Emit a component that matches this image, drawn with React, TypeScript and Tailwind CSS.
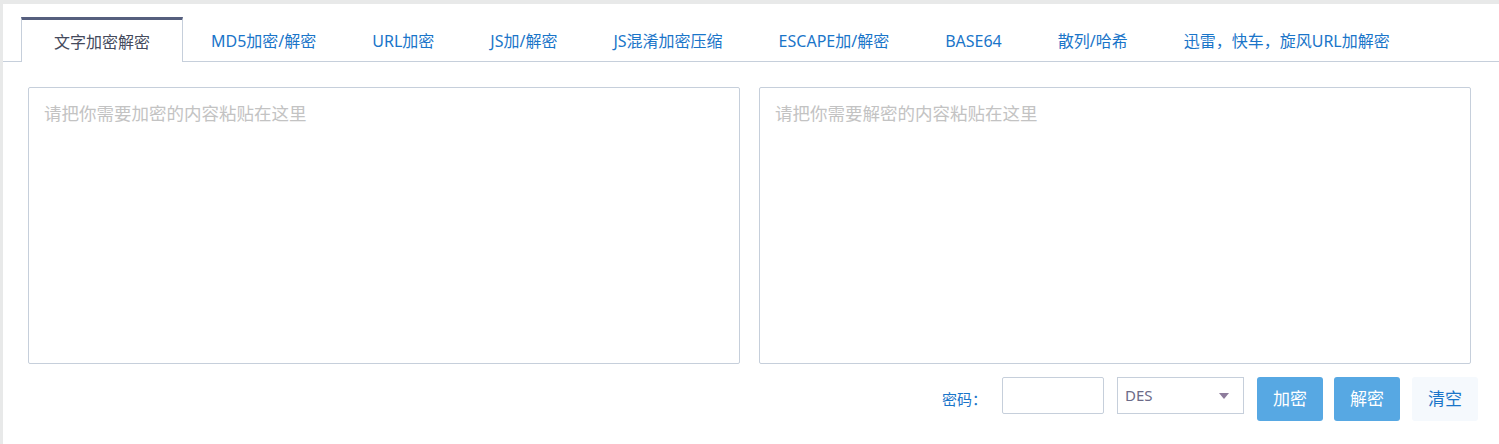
import React, { useState } from 'react';

const tabs = [
  '文字加密解密',
  'MD5加密/解密',
  'URL加密',
  'JS加/解密',
  'JS混淆加密压缩',
  'ESCAPE加/解密',
  'BASE64',
  '散列/哈希',
  '迅雷，快车，旋风URL加解密',
];

export default function App() {
  const [active, setActive] = useState(0);

  return (
    <div
      className="min-h-[444px] bg-[#e8e9e9] pt-[4px] pl-[3px]"
      style={{ fontFamily: '"Noto Sans", "Noto Sans CJK SC", sans-serif' }}
    >
      <div className="bg-white min-h-[440px]">
        {/* Tabs */}
        <div className="flex pt-[13px] pl-[18px] border-b border-[#c6cfdb]">
          {tabs.map((t, i) =>
            i === active ? (
              <button
                key={t}
                onClick={() => setActive(i)}
                className="w-[162px] h-[45px] -mb-px bg-white border-x border-[#c6cfdb] border-t-[3px] border-t-[#565f7e] text-[16px] text-[#444a5c] leading-[40px] pt-[2px]"
              >
                {t}
              </button>
            ) : (
              <button
                key={t}
                onClick={() => setActive(i)}
                className="px-[28px] h-[44px] text-[16px] text-[#1a75c9] leading-[40px] pt-[4px] whitespace-nowrap"
              >
                {t}
              </button>
            )
          )}
        </div>

        {/* Text areas */}
        <div className="pl-[25px] pr-[28px] pt-[25px]">
          <div className="grid grid-cols-2 gap-[19px]">
            <textarea
              placeholder="请把你需要加密的内容粘贴在这里"
              className="h-[277px] resize-none border border-[#c6cfdb] rounded-[2px] px-[15px] py-[11px] text-[17.5px] leading-[28px] text-[#333] placeholder:text-[#c3c3c3] outline-none"
            />
            <textarea
              placeholder="请把你需要解密的内容粘贴在这里"
              className="h-[277px] resize-none border border-[#c6cfdb] rounded-[2px] px-[15px] py-[11px] text-[17.5px] leading-[28px] text-[#333] placeholder:text-[#c3c3c3] outline-none"
            />
          </div>

          {/* Controls */}
          <div className="flex items-start justify-end mt-[13px] mr-[-7px]">
            <span className="text-[15px] text-[#1a75c9] h-[44px] leading-[44px] mr-[15px]">密码：</span>
            <input
              type="text"
              className="w-[102px] h-[37px] border border-[#c6cfdb] rounded-[2px] mr-[13px] px-2 outline-none"
            />
            <div className="relative w-[127px] h-[37px] border border-[#c6cfdb] mr-[13px]">
              <span className="absolute left-[7px] top-0 leading-[35px] text-[15px] text-[#6c6a88]">DES</span>
              <span className="absolute right-[14px] top-[15px] w-0 h-0 border-l-[5px] border-r-[5px] border-t-[6px] border-l-transparent border-r-transparent border-t-[#8e7c9c]" />
            </div>
            <button className="w-[66px] h-[44px] rounded-[3px] bg-[#57a8e3] text-white text-[17px] mr-[11px]">加密</button>
            <button className="w-[66px] h-[44px] rounded-[3px] bg-[#57a8e3] text-white text-[17px] mr-[12px]">解密</button>
            <button className="w-[66px] h-[44px] rounded-[3px] bg-[#f5f9fd] text-[#1a75c9] text-[17px]">清空</button>
          </div>
        </div>
      </div>
    </div>
  );
}
